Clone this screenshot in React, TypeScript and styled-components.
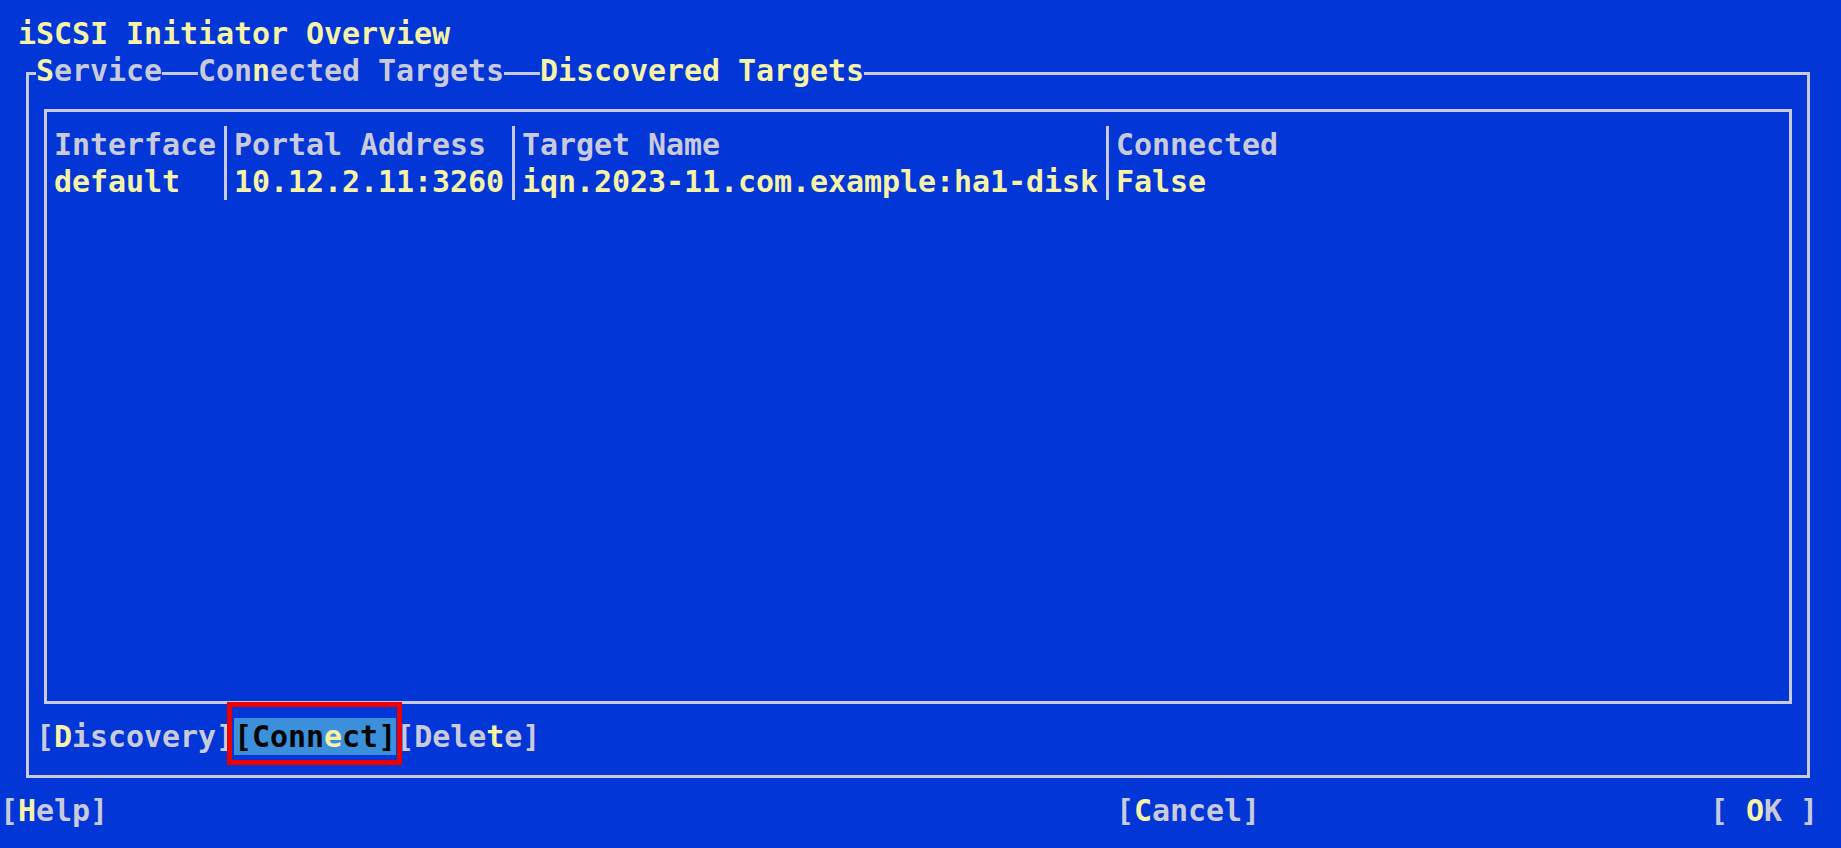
import React from 'react'
import styled, { createGlobalStyle } from 'styled-components'

// terminal cell: 18px wide, 37px tall
const BG = '#0336d6'
const GRAY = '#c9cbdd'
const YELLOW = '#f7f3a6'
const LINE = '#c9cbdd'
const HILITE = '#3b8fdb'

const GlobalStyle = createGlobalStyle`
  html, body {
    margin: 0;
    padding: 0;
    background: ${BG};
  }
`

const Screen = styled.div`
  box-sizing: border-box;
  width: 1841px;
  height: 848px;
  overflow: hidden;
  padding-top: 15px;
  background: ${BG};
  color: ${GRAY};
  font-family: "DejaVu Sans Mono", "Liberation Mono", monospace;
  font-weight: bold;
  font-size: 30px;
  line-height: 37px;
  letter-spacing: -0.06px;
  white-space: pre;
`

const Title = styled.div`
  height: 37px;
  padding-left: 18px;
  color: ${YELLOW};
`

const Frame = styled.div`
  box-sizing: border-box;
  width: 1784px;
  margin: 20px 0 0 26px;
  border: 3px solid ${LINE};
  padding-bottom: 20px;
`

const TabStrip = styled.div`
  display: flex;
  gap: 36px;
  height: 37px;
  margin-top: -23px;
  padding-left: 7px;
`

const Tab = styled.span<{ $active?: boolean }>`
  background: ${BG};
  color: ${p => (p.$active ? YELLOW : GRAY)};
`

const TableBox = styled.div`
  box-sizing: border-box;
  height: 595px;
  margin: 20px 15px 0;
  border: 3px solid ${LINE};
  padding: 14px 0 0 7px;
`

const TableGrid = styled.div`
  display: grid;
  grid-template-columns: 162px 288px 594px 1fr;
`

const Cell = styled.div<{ $sep?: boolean; $data?: boolean }>`
  height: 37px;
  color: ${p => (p.$data ? YELLOW : GRAY)};
  ${p =>
    p.$sep &&
    `
    margin-left: 8px;
    padding-left: 7px;
    border-left: 3px solid ${LINE};
  `}
`

const ButtonRow = styled.div`
  display: flex;
  height: 37px;
  margin-top: 14px;
  padding-left: 7px;
`

const Button = styled.span<{ $focused?: boolean }>`
  position: relative;
  color: ${p => (p.$focused ? '#050505' : GRAY)};
  background: ${p => (p.$focused ? HILITE : 'transparent')};

  ${p =>
    p.$focused &&
    `
    &::after {
      content: '';
      position: absolute;
      top: -16px;
      right: -6px;
      bottom: -10px;
      left: -7px;
      border: 5px solid #ee0000;
      pointer-events: none;
    }
  `}
`

const Hot = styled.span`
  color: ${YELLOW};
`

const BottomBar = styled.div`
  display: grid;
  grid-template-columns: 1116px 594px auto;
  height: 37px;
  margin-top: 14px;
`

function Keyed({ text, hot }: { text: string; hot?: number }) {
  if (hot === undefined) return <>{text}</>
  return (
    <>
      {text.slice(0, hot)}
      <Hot>{text[hot]}</Hot>
      {text.slice(hot + 1)}
    </>
  )
}

const columns = ['Interface', 'Portal Address', 'Target Name', 'Connected']
const rows = [['default', '10.12.2.11:3260', 'iqn.2023-11.com.example:ha1-disk', 'False']]

export default function App() {
  return (
    <>
      <GlobalStyle />
      <Screen>
        <Title>iSCSI Initiator Overview</Title>
        <Frame>
          <TabStrip>
            <Tab><Keyed text="Service" hot={0} /></Tab>
            <Tab><Keyed text="Connected Targets" hot={3} /></Tab>
            <Tab $active>Discovered Targets</Tab>
          </TabStrip>
          <TableBox>
            <TableGrid>
              {columns.map((c, i) => (
                <Cell key={c} $sep={i > 0}>{c}</Cell>
              ))}
              {rows.map(r =>
                r.map((v, i) => (
                  <Cell key={v} $sep={i > 0} $data>{v}</Cell>
                ))
              )}
            </TableGrid>
          </TableBox>
          <ButtonRow>
            <Button>[<Keyed text="Discovery" hot={0} />]</Button>
            <Button $focused>[<Keyed text="Connect" hot={4} />]</Button>
            <Button>[<Keyed text="Delete" hot={4} />]</Button>
          </ButtonRow>
        </Frame>
        <BottomBar>
          <Button>[<Keyed text="Help" hot={0} />]</Button>
          <Button>[<Keyed text="Cancel" hot={0} />]</Button>
          <Button>[<Keyed text=" OK " hot={1} />]</Button>
        </BottomBar>
      </Screen>
    </>
  )
}
